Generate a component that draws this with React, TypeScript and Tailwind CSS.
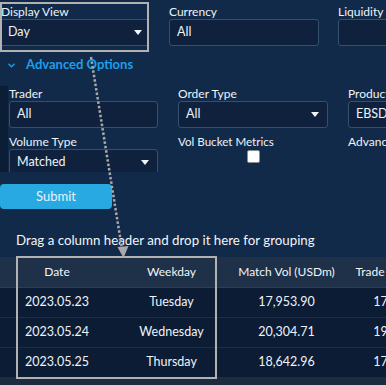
import { FC } from 'react';

const Caret: FC = () => (
  <svg width="8" height="5" viewBox="0 0 8 5" className="shrink-0">
    <path d="M0 0 L8 0 L4 5 Z" fill="#f2f6fa" />
  </svg>
);

interface FieldProps {
  label: string;
  value?: string;
  width: string;
  select?: boolean;
}

const Field: FC<FieldProps> = ({ label, value, width, select }) => (
  <div className={`${width} shrink-0`}>
    <div className="h-[15px] text-[12px] leading-[15px] whitespace-nowrap">{label}</div>
    <div className="flex h-[27px] items-center justify-between rounded-[3px] border border-[#34506f] bg-[#0f213d] pl-[7px] pr-[8px] text-[12.5px]">
      <span className="whitespace-nowrap">{value}</span>
      {select && <Caret />}
    </div>
  </div>
);

const rows = [
  { date: '2023.05.23', day: 'Tuesday', vol: '17,953.90', trade: '17,412.05' },
  { date: '2023.05.24', day: 'Wednesday', vol: '20,304.71', trade: '19,880.36' },
  { date: '2023.05.25', day: 'Thursday', vol: '18,642.96', trade: '17,950.48' },
];

const cols = ['w-[114px]', 'w-[115px]', 'w-[115px]', 'w-[115px]'];

export default function App() {
  return (
    <div className="relative h-[385px] w-[386px] overflow-hidden bg-[#112a4a] font-['Lato',sans-serif] text-[#eef3f8]">
      {/* top filters */}
      <div className="flex h-[46px] pt-[4px]">
        <div className="ml-[1px] w-[146px] shrink-0">
          <div className="h-[15px] text-[12px] leading-[15px]">Display View</div>
          <div className="flex h-[27px] items-center justify-between border-y border-[#34506f] bg-[#0f213d] pl-[7px] pr-[5px] text-[12.5px]">
            <span>Day</span>
            <Caret />
          </div>
        </div>
        <div className="ml-[22px]">
          <Field label="Currency" value="All" width="w-[150px]" />
        </div>
        <div className="ml-[19px]">
          <Field label="Liquidity" width="w-[80px]" />
        </div>
      </div>

      {/* advanced options toggle */}
      <div className="mt-[9px] flex h-[20px] items-center pl-[8px] text-[13px] font-bold text-[#1e9ee9]">
        <svg width="7" height="5" viewBox="0 0 7 5" className="mr-[11px]">
          <path d="M0.5 0.8 L3.5 3.8 L6.5 0.8" fill="none" stroke="#1e9ee9" strokeWidth="1.3" />
        </svg>
        <span>Advanced Options</span>
      </div>

      {/* advanced panel */}
      <div className="mt-[11px] flex h-[86px] overflow-hidden">
        <div className="w-[8px] shrink-0 bg-[#0c1e36]" />
        <div className="pl-[1px]">
          <div className="flex gap-[20px]">
            <Field label="Trader" value="All" width="w-[149px]" />
            <Field label="Order Type" value="All" width="w-[150px]" select />
            <Field label="Product" value="EBSD" width="w-[80px]" />
          </div>
          <div className="mt-[6px] flex gap-[20px]">
            <Field label="Volume Type" value="Matched" width="w-[149px]" select />
            <div className="w-[150px] shrink-0">
              <div className="h-[15px] text-[11.6px] leading-[15px]">Vol Bucket Metrics</div>
              <div className="ml-[69px] mt-[1px] h-[13px] w-[13px] rounded-[2px] border border-[#8a8f96] bg-white" />
            </div>
            <div className="h-[15px] text-[12px] leading-[15px] whitespace-nowrap">Advanced Filters</div>
          </div>
        </div>
      </div>

      {/* submit */}
      <button className="mt-[12px] flex h-[25px] w-[112px] items-center justify-center rounded-[4px] bg-[#29a9e1] text-[13px] text-[#e4f3fc]">
        Submit
      </button>

      {/* group panel */}
      <div className="mt-[22px] h-[18px] pl-[16px] text-[13.3px] leading-[18px] text-[#f1f5f9]">
        Drag a column header and drop it here for grouping
      </div>

      {/* grid */}
      <div className="mt-[8px] text-[12px]">
        <div className="flex h-[31px] items-center border-b border-[#2c3e57] bg-[#1f3049] text-[#f1f5f9]">
          {['Date', 'Weekday', 'Match Vol (USDm)', 'Trade Vol (USDm)'].map((h, i) => (
            <div key={h} className={`${cols[i]} shrink-0 flex justify-center whitespace-nowrap`}>
              {h}
            </div>
          ))}
        </div>
        {rows.map((r) => (
          <div key={r.date} className="flex h-[30px] items-center border-b border-[#1b2e48] bg-[#0c1c35] text-[12.5px]">
            {[r.date, r.day, r.vol, r.trade].map((c, i) => (
              <div key={i} className={`${cols[i]} shrink-0 flex justify-center whitespace-nowrap`}>
                {c}
              </div>
            ))}
          </div>
        ))}
        <div className="h-[10px] bg-[#1c2b40]" />
      </div>

      {/* annotation overlay */}
      <div className="pointer-events-none absolute left-0 top-[2px] h-[50px] w-[149px] border-2 border-[#b2b2b2]" />
      <div className="pointer-events-none absolute left-[16px] top-[256px] h-[123px] w-[201px] border-2 border-[#b2b2b2]" />
      <svg className="pointer-events-none absolute left-0 top-0" width="386" height="385">
        <line x1="91" y1="57" x2="122" y2="249" stroke="#a9a9a9" strokeWidth="2.5" strokeDasharray="2.5 2" />
        <path d="M117.5 247 L128.5 246 L123.5 258 Z" fill="#a9a9a9" />
      </svg>
    </div>
  );
}
